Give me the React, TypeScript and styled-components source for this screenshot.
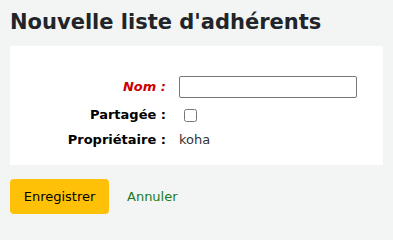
import React from 'react';
import styled, { createGlobalStyle } from 'styled-components';

const GlobalStyle = createGlobalStyle`
  html, body {
    margin: 0;
    padding: 0;
    background: #f3f4f4;
  }
  body {
    font-family: "DejaVu Sans", "Noto Sans", sans-serif;
    font-size: 13px;
    color: #333;
  }
`;

const Page = styled.main`
  padding: 8px 10px 0;
`;

const Title = styled.h1`
  margin: 0 0 10px;
  font-size: 21px;
  line-height: 28px;
  font-weight: bold;
  color: #212529;
`;

const Panel = styled.fieldset`
  margin: 0;
  border: 0;
  background: #fff;
  padding: 27px 0 14px;
`;

const Row = styled.div<{ $tall?: boolean }>`
  display: flex;
  align-items: center;
  padding: 3px 0;
  min-height: ${(p) => (p.$tall ? '22px' : '16px')};
`;

const Label = styled.label<{ $required?: boolean }>`
  width: 156px;
  margin-right: 13px;
  text-align: right;
  font-weight: bold;
  line-height: 16px;
  font-style: ${(p) => (p.$required ? 'italic' : 'normal')};
  color: ${(p) => (p.$required ? '#c00' : '#000')};
`;

const TextInput = styled.input`
  box-sizing: border-box;
  width: 178px;
  height: 22px;
  margin: 0;
  border: 1px solid #767676;
  border-radius: 2px;
  background: #fff;
  font: inherit;
`;

const Check = styled.input`
  margin: 0 0 0 5px;
  width: 13px;
  height: 13px;
`;

const Value = styled.span`
  line-height: 16px;
  color: #333;
`;

const Actions = styled.div`
  display: flex;
  align-items: center;
  gap: 18px;
  margin-top: 14px;
`;

const SubmitButton = styled.button`
  box-sizing: border-box;
  width: 99px;
  height: 35px;
  border: 0;
  border-radius: 4px;
  background: #ffc107;
  color: #000;
  font-family: "DejaVu Sans", sans-serif;
  font-size: 13px;
  padding: 0;
`;

const CancelLink = styled.a`
  color: #1a7a1a;
  text-decoration: none;
  font-size: 13px;
`;

export default function App() {
  return (
    <Page>
      <GlobalStyle />
      <Title>Nouvelle liste d'adhérents</Title>
      <Panel>
        <Row $tall>
          <Label $required htmlFor="name">Nom :</Label>
          <TextInput id="name" type="text" />
        </Row>
        <Row $tall>
          <Label htmlFor="shared">Partagée :</Label>
          <Check id="shared" type="checkbox" />
        </Row>
        <Row>
          <Label>Propriétaire :</Label>
          <Value>koha</Value>
        </Row>
      </Panel>
      <Actions>
        <SubmitButton type="submit">Enregistrer</SubmitButton>
        <CancelLink href="#">Annuler</CancelLink>
      </Actions>
    </Page>
  );
}
